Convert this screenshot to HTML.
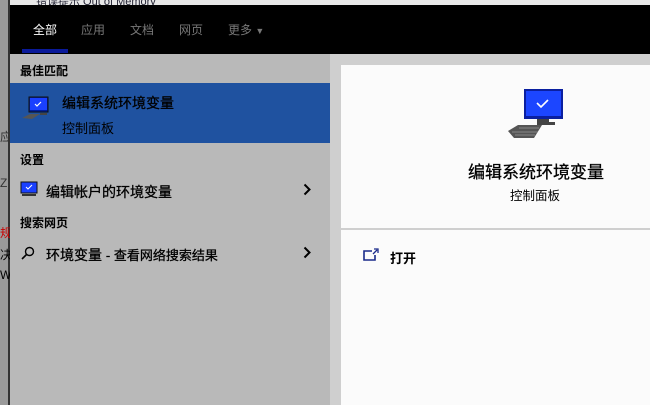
<!DOCTYPE html><html><head><meta charset="utf-8"><style>
body{margin:0;width:650px;height:405px;overflow:hidden;background:#b9b9b9;position:relative;font-family:"Liberation Sans","Noto Sans CJK SC",sans-serif;}
div{position:absolute;box-sizing:border-box}
.t{font-size:14px;color:#000;white-space:nowrap;-webkit-text-stroke:0.3px #000}
.s{font-size:12px;color:#000;white-space:nowrap}
.h{font-size:12px;font-weight:bold;color:#000;white-space:nowrap}
</style></head><body>
<div style="left:0;top:0;width:650px;height:6px;background:#e8e8e8"></div>
<div class="s" style="left:36px;top:-7px;font-size:11px;color:#223">错误提示 Out of Memory</div>
<div style="left:0;top:0;width:8px;height:405px;background:#9a9a9a"></div>
<div style="left:8px;top:0;width:2px;height:405px;background:#333"></div>
<div class="s" style="left:0;top:128px;color:#333">应</div>
<div class="s" style="left:0;top:176px;color:#333">Z</div>
<div class="s" style="left:0;top:224px;color:#c00">规</div>
<div class="s" style="left:0;top:246px;color:#000">决</div>
<div class="s" style="left:0;top:268px;color:#000">W</div>
<div style="left:10px;top:5px;width:640px;height:49px;background:#000"></div>
<div class="s" style="left:33px;top:21px;color:#fff">全部</div>
<div class="s" style="left:81px;top:21px;color:#777">应用</div>
<div class="s" style="left:130px;top:21px;color:#777">文档</div>
<div class="s" style="left:179px;top:21px;color:#777">网页</div>
<div class="s" style="left:228px;top:21px;color:#777">更多 <span style="font-size:9px">▼</span></div>
<div style="left:22px;top:49px;width:46px;height:4px;background:#0a1a9a"></div>
<div style="left:10px;top:54px;width:320px;height:351px;background:#b9b9b9"></div>
<div style="left:330px;top:54px;width:11px;height:351px;background:#cfcfcf"></div>
<div style="left:330px;top:54px;width:320px;height:11px;background:#cfcfcf"></div>
<div style="left:341px;top:65px;width:309px;height:340px;background:#fbfbfb"></div>
<div style="left:341px;top:228px;width:309px;height:2px;background:#cfcfcf"></div>
<div class="h" style="left:20px;top:62px">最佳匹配</div>
<div style="left:10px;top:83px;width:320px;height:60px;background:#1f52a0"></div>
<svg style="position:absolute;left:20px;top:96px" width="32" height="28" viewBox="0 0 32 28"><rect x="9" y="1" width="19" height="15" fill="#001e9a" stroke="#111"/><rect x="10" y="2" width="17" height="12" fill="#1a40ff"/><path d="M15 8l2 2 4-4" stroke="#fff" fill="none" stroke-width="1.2"/><path d="M2 22l8-4h10l-8 5z" fill="#555"/><path d="M20 17h7v2h-7z" fill="#444"/></svg>
<div class="t" style="left:62px;top:93px">编辑系统环境变量</div>
<div class="s" style="left:62px;top:118px;font-size:13px">控制面板</div>
<div class="h" style="left:20px;top:151px">设置</div>
<svg style="position:absolute;left:20px;top:181px" width="18" height="16" viewBox="0 0 18 16"><rect x="1" y="1" width="16" height="11" fill="#1a40ff" stroke="#111"/><path d="M6 6l2 2 4-4" stroke="#fff" fill="none"/><rect x="2" y="13" width="14" height="2" fill="#333"/></svg>
<div class="t" style="left:46px;top:182px">编辑帐户的环境变量</div>
<svg style="position:absolute;left:303px;top:183px" width="8" height="13" viewBox="0 0 8 13"><path d="M1.5 1.5l5 5-5 5" stroke="#000" stroke-width="2" fill="none"/></svg>
<div class="h" style="left:20px;top:214px">搜索网页</div>
<svg style="position:absolute;left:21px;top:246px" width="14" height="14" viewBox="0 0 14 14"><circle cx="8.5" cy="5.5" r="4" stroke="#000" stroke-width="1.4" fill="none"/><path d="M5.5 8.5L1 13" stroke="#000" stroke-width="1.6"/></svg>
<div class="t" style="left:46px;top:245px">环境变量 <span style="font-size:13px">- 查看网络搜索结果</span></div>
<svg style="position:absolute;left:303px;top:246px" width="8" height="13" viewBox="0 0 8 13"><path d="M1.5 1.5l5 5-5 5" stroke="#000" stroke-width="2" fill="none"/></svg>
<svg style="position:absolute;left:507px;top:88px" width="58" height="52" viewBox="0 0 58 52"><rect x="17" y="1" width="39" height="30" fill="#0a1fa0"/><rect x="19" y="3" width="35" height="25" fill="#1c46ff"/><path d="M30 15l4 4 7-7" stroke="#fff" fill="none" stroke-width="1.6"/><path d="M30 31h12v3h6v3H30z" fill="#444"/><path d="M1 43l10-6h24l-8 13H7z" fill="#555"/><path d="M5 44h26M8 47h20M12 40h20" stroke="#999" stroke-width="0.7"/></svg>
<div style="left:468px;top:158px;font-size:17px;color:#000;white-space:nowrap;-webkit-text-stroke:0.3px #000">编辑系统环境变量</div>
<div style="left:510px;top:185px;font-size:12.5px;color:#000;white-space:nowrap">控制面板</div>
<svg style="position:absolute;left:363px;top:248px" width="16" height="14" viewBox="0 0 16 14"><path d="M9 3H1v9h11V7" stroke="#1a2a8a" fill="none" stroke-width="1.6"/><path d="M10 6l4-4M11 1h4v4" stroke="#1a2a8a" fill="none" stroke-width="1.3"/></svg>
<div class="h" style="left:390px;top:248px;font-size:13px">打开</div>
</body></html>
